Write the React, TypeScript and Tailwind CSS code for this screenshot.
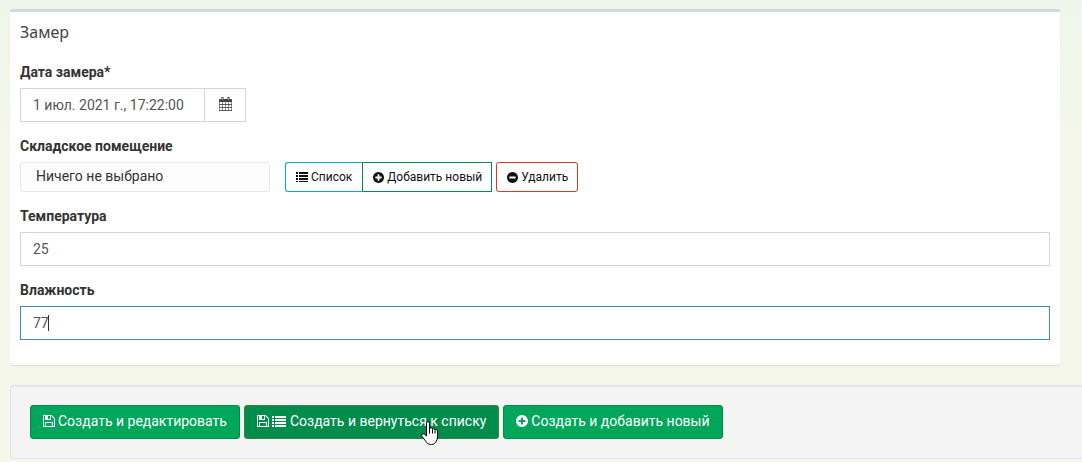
import type { ReactNode } from "react";

const paths = {
  floppy:
    "M512 1536h768v-384h-768v384zm896 0h128v-896q0-14-10-38.5t-20-34.5l-281-281q-10-10-34-20t-39-10v416q0 40-28 68t-68 28h-576q-40 0-68-28t-28-68v-416h-128v1280h128v-416q0-40 28-68t68-28h832q40 0 68 28t28 68v416zm-384-928v-320q0-13-9.5-22.5t-22.5-9.5h-192q-13 0-22.5 9.5t-9.5 22.5v320q0 13 9.5 22.5t22.5 9.5h192q13 0 22.5-9.5t9.5-22.5zm640 32v928q0 40-28 68t-68 28h-1344q-40 0-68-28t-28-68v-1344q0-40 28-68t68-28h928q40 0 88 20t76 48l280 280q28 28 48 76t20 88z",
  plus: "M1344 960v-128q0-26-19-45t-45-19h-256v-256q0-26-19-45t-45-19h-128q-26 0-45 19t-19 45v256h-256q-26 0-45 19t-19 45v128q0 26 19 45t45 19h256v256q0 26 19 45t45 19h128q26 0 45-19t19-45v-256h256q26 0 45-19t19-45zm320-64q0 209-103 385.5t-279.5 279.5-385.5 103-385.5-103-279.5-279.5-103-385.5 103-385.5 279.5-279.5 385.5-103 385.5 103 279.5 279.5 103 385.5z",
  minus:
    "M1344 960v-128q0-26-19-45t-45-19h-768q-26 0-45 19t-19 45v128q0 26 19 45t45 19h768q26 0 45-19t19-45zm320-64q0 209-103 385.5t-279.5 279.5-385.5 103-385.5-103-279.5-279.5-103-385.5 103-385.5 279.5-279.5 385.5-103 385.5 103 279.5 279.5 103 385.5z",
};

function Icon({ name, className }: { name: keyof typeof paths; className: string }) {
  return (
    <svg viewBox="128 128 1536 1536" className={className} fill="currentColor" aria-hidden="true">
      <path d={paths[name]} />
    </svg>
  );
}

function ListIcon({ wide = false }: { wide?: boolean }) {
  const d = wide
    ? "M0 0h2v2H0zM3 0h11v2H3zM0 3h2v2H0zM3 3h11v2H3zM0 6h2v2H0zM3 6h11v2H3zM0 9h2v2H0zM3 9h11v2H3z"
    : "M0 0h2v2H0zM3 0h9v2H3zM0 3h2v2H0zM3 3h9v2H3zM0 6h2v2H0zM3 6h9v2H3zM0 9h2v1H0zM3 9h9v1H3z";
  return (
    <svg
      viewBox={wide ? "0 0 14 11" : "0 0 12 10"}
      className={wide ? "h-[11px] w-[14px]" : "h-[10px] w-3"}
      fill="currentColor"
      aria-hidden="true"
    >
      <path d={d} />
    </svg>
  );
}

function CalendarIcon() {
  return (
    <svg viewBox="0 0 13 14" className="h-[14px] w-[13px]" fill="currentColor" aria-hidden="true">
      <path d="M1 2h11q1 0 1 1v2H0V3q0-1 1-1z" />
      <path d="M2.500 0h2v3.500h-2zM8.500 0h2v3.500h-2z" />
      <path d="M3.200 1h.6v2h-.6zM9.200 1h.6v2h-.6z" fill="#e5dccf" />
      <path d="M0 7h13v1H0zM0 10h13v1H0zM0 13h13v1H0z" opacity=".85" />
      <path d="M0 5h1v9H0zM3 5h1v9H3zM6 5h1v9H6zM9 5h1v9H9zM12 5h1v9h-1z" opacity=".6" />
    </svg>
  );
}

function Field({ id, label, children }: { id: string; label: string; children: ReactNode }) {
  return (
    <div className="mb-[14px]">
      <label htmlFor={id} className="mb-[6px] block font-bold text-[#333333]">
        {label}
      </label>
      {children}
    </div>
  );
}

const input =
  "h-[34px] border border-[#d2d6de] bg-white px-3 text-sm text-[#555555] outline-none";
const small = "flex h-[30px] items-center gap-[3px] border bg-white text-xs text-[#111111]";
const save =
  "flex h-[34px] items-center rounded-[3px] border px-3 pb-[2px] text-sm text-white";

export default function App() {
  return (
    <div className="min-h-screen overflow-hidden bg-linear-to-b from-[#eef5ea] to-[#f5f7eb] to-30% pt-[9px] pl-[10px] font-[Roboto,sans-serif] text-sm leading-5">
      <section className="mr-[22px] mb-5 rounded-[3px] border-t-[3px] border-[#d2d6de] bg-white shadow-[0_1px_1px_rgba(0,0,0,0.1)]">
        <h4 className="p-[10px] pb-5 font-['Noto_Sans',sans-serif] text-base leading-5 text-[#444444]">
          Замер
        </h4>
        <div className="px-[10px] pb-[11px]">
          <Field id="date" label="Дата замера*">
            <div className="flex">
              <input id="date" className={`${input} w-[185px]`} defaultValue="1 июл. 2021 г., 17:22:00" />
              <button
                type="button"
                aria-label="Календарь"
                className="flex h-[34px] w-[41px] items-center justify-center border border-l-0 border-[#d2d6de] pb-[2px] text-[#444444]"
              >
                <CalendarIcon />
              </button>
            </div>
          </Field>
          <Field id="room" label="Складское помещение">
            <div className="flex">
              <select
                id="room"
                className="mr-[15px] h-[30px] w-[250px] appearance-none rounded-[3px] border border-[#e7e7e7] bg-[#fdfdfd] px-[15px] pb-[2px] text-sm text-[#333333]"
              >
                <option>Ничего не выбрано</option>
              </select>
              <button type="button" className={`${small} rounded-l-[3px] border-r-0 border-[#00acd6] px-[10px]`}>
                <ListIcon />
                Список
              </button>
              <button type="button" className={`${small} mr-1 border-[#008d4c] pr-[9px] pl-[10px]`}>
                <Icon name="plus" className="size-[11px]" />
                Добавить новый
              </button>
              <button type="button" className={`${small} rounded-[3px] border-[#d73925] pr-[9px] pl-[10px]`}>
                <Icon name="minus" className="size-[11px]" />
                Удалить
              </button>
            </div>
          </Field>
          <Field id="temperature" label="Температура">
            <input id="temperature" className={`${input} block w-full`} defaultValue="25" />
          </Field>
          <Field id="humidity" label="Влажность">
            <div className="relative">
              <input
                id="humidity"
                className="block h-[34px] w-full border border-[#3c8dbc] bg-white px-3 text-sm text-[#555555] outline-none"
                defaultValue="77"
              />
              <span className="absolute top-[9px] left-7 h-4 w-px bg-[#333333]" />
            </div>
          </Field>
        </div>
      </section>

      <div className="flex gap-1 rounded-l-[3px] border border-r-0 border-[#e3e3e3] bg-[#f4f4f4] px-[19px] py-[19px] shadow-[inset_0_1px_1px_rgba(0,0,0,0.05)]">
        <button type="submit" className={`${save} gap-[3px] border-[#008d4c] bg-[#00a65a]`}>
          <Icon name="floppy" className="size-3" />
          Создать и редактировать
        </button>
        <button type="submit" className={`${save} relative gap-[3px] border-[#398439] bg-[#008d4c]`}>
          <Icon name="floppy" className="size-3" />
          <ListIcon wide />
          <span className="pl-px">Создать и вернуться к списку</span>
          <svg
            viewBox="0 0 17 24"
            className="absolute top-[15px] left-[176px] h-6 w-[17px]"
            fill="white"
            stroke="black"
            strokeWidth="1"
            strokeLinejoin="round"
            aria-hidden="true"
          >
            <path d="M5.500 15V2.500Q5.500 .5 7 .5T8.500 2.500V8Q9 6.500 10.300 6.800T11.500 8.500Q12 7.300 13 7.700T14 9.300Q14.600 8.300 15.500 8.700T16.500 10V16Q16.500 19 14.500 21.500Q13 23.500 10.500 23.500H9.500Q6.500 23.500 5 20.500L1 15.500Q.2 14 1.200 13.200T3.500 13.300Z" />
            <path d="M8.500 8v4.500M11.500 8.500v4M14 9.500v3" fill="none" />
          </svg>
        </button>
        <button type="submit" className={`${save} gap-[3px] border-[#008d4c] bg-[#00a65a]`}>
          <Icon name="plus" className="size-3" />
          Создать и добавить новый
        </button>
      </div>
    </div>
  );
}
